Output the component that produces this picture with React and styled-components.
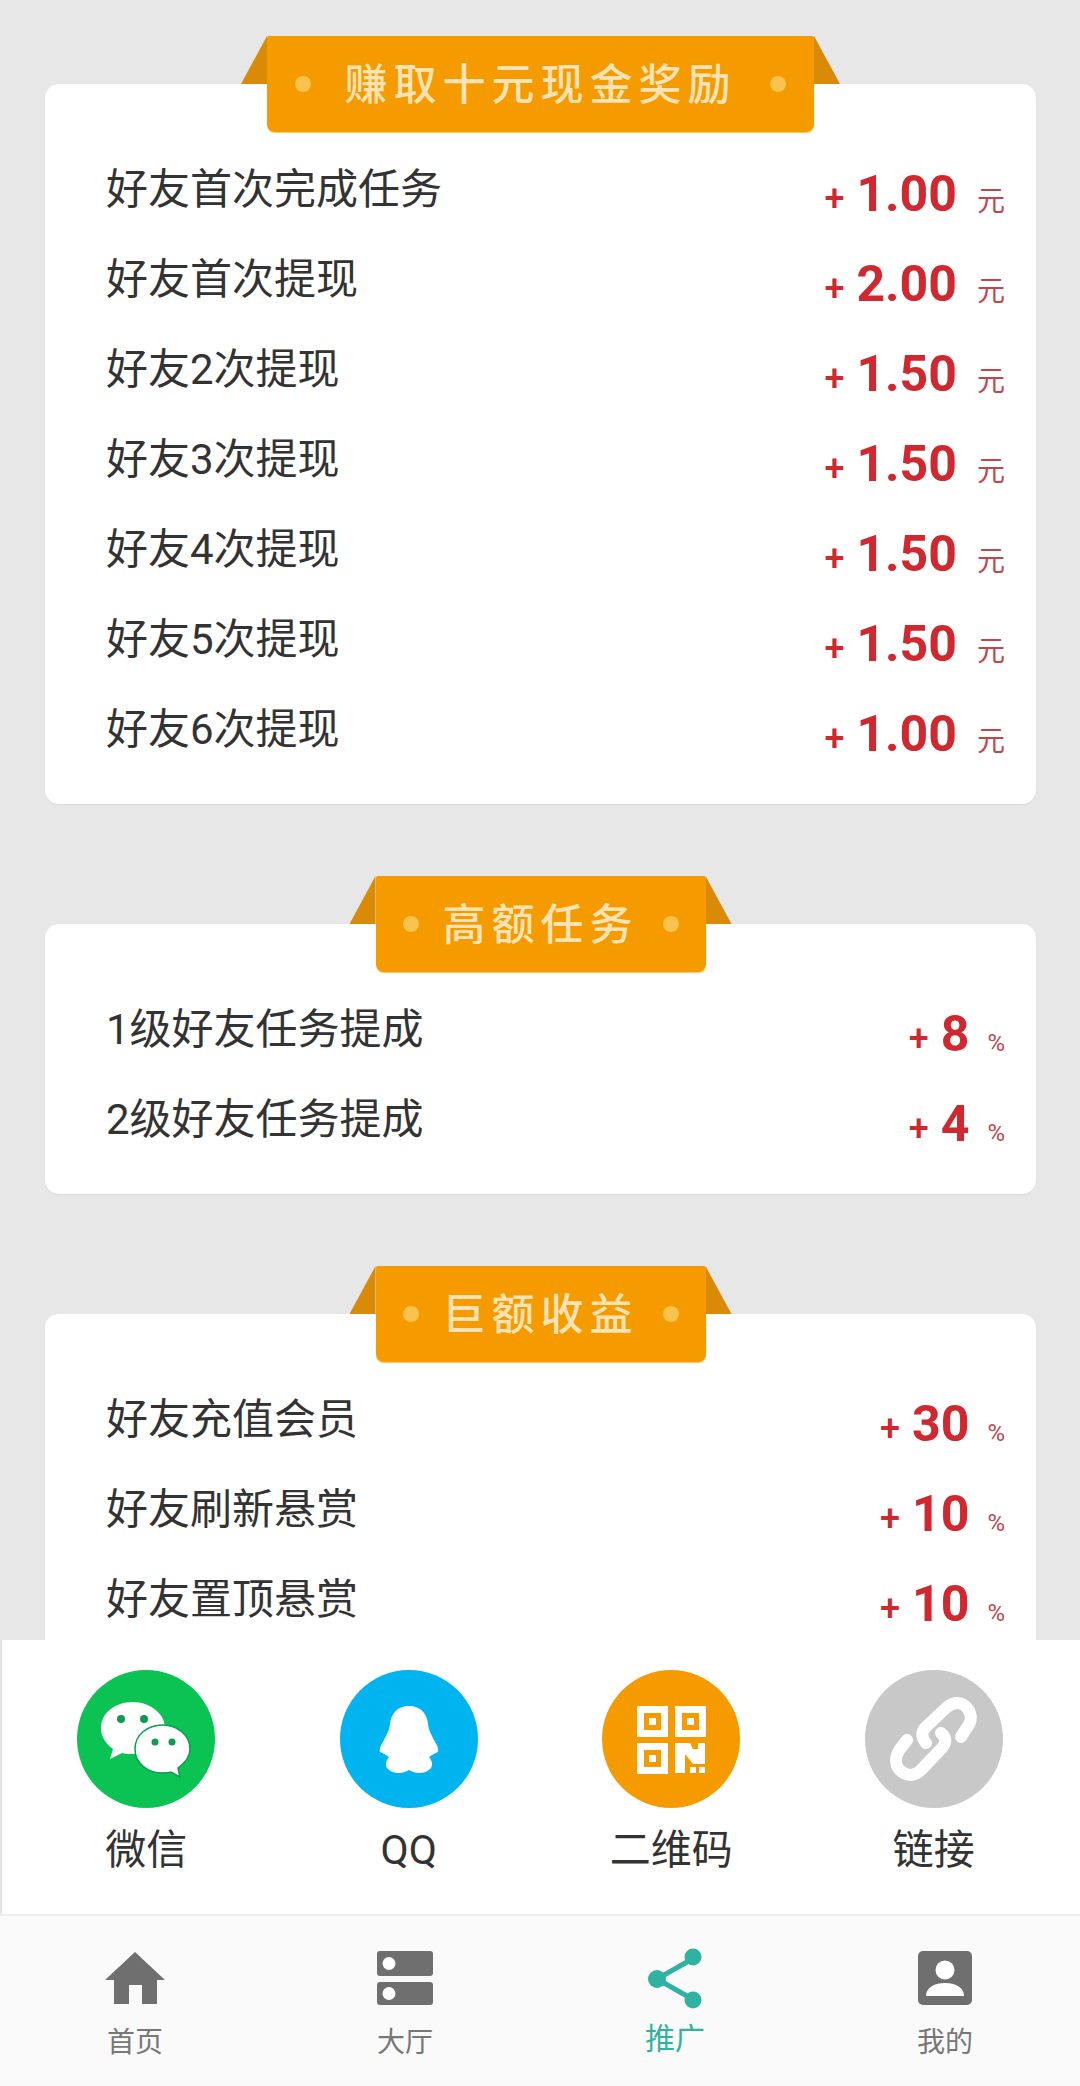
import React from 'react'
import styled, { createGlobalStyle } from 'styled-components'

const GlobalStyle = createGlobalStyle`
  html, body { margin:0; padding:0; background:#e7e7e7; }
  body { font-family:"Roboto","Noto Sans CJK SC",sans-serif; }
`

const sections = [
  {
    title: '赚取十元现金奖励', wide: true, unit: '元',
    rows: [
      ['好友首次完成任务', '1.00'], ['好友首次提现', '2.00'], ['好友2次提现', '1.50'], ['好友3次提现', '1.50'],
      ['好友4次提现', '1.50'], ['好友5次提现', '1.50'], ['好友6次提现', '1.00'],
    ],
  },
  { title: '高额任务', unit: '%', rows: [['1级好友任务提成', '8'], ['2级好友任务提成', '4']] },
  { title: '巨额收益', unit: '%', rows: [['好友充值会员', '30'], ['好友刷新悬赏', '10'], ['好友置顶悬赏', '10']] },
]

function WechatIcon() {
  return (
    <svg width="138" height="138" viewBox="0 0 138 138">
      <circle cx="69" cy="69" r="69" fill="#0ac353" />
      <path d="M56 32c-18 0-32 11-32 26 0 9 5 16 12 21l-3 10 12-6c3 1 6 1 11 1 16 0 32-11 32-26S72 32 56 32z" fill="#fff" />
      <circle cx="44" cy="49" r="4" fill="#0a9d50" />
      <circle cx="67" cy="49" r="4" fill="#0a9d50" />
      <path d="M86 55c-16 0-28 10-28 24s12 24 28 24c3 0 6 0 8-1l9 5-2-9c7-5 12-11 12-19 0-14-13-24-27-24z" fill="#fff" stroke="#0a9d50" strokeWidth="1.5" />
      <circle cx="78" cy="72" r="3.5" fill="#0a9d50" />
      <circle cx="95" cy="72" r="3.5" fill="#0a9d50" />
    </svg>
  )
}

function QQIcon() {
  return (
    <svg width="138" height="138" viewBox="0 0 138 138">
      <circle cx="69" cy="69" r="69" fill="#00b4f0" />
      <path d="M69 36C57 36 51 44 50 54C49.500 60 47 64 44 70C41 75 39 79 40 82C43 83 46 85 49 87C45 92 45 97 49 100C54 104 63 104 69 100C75 104 84 104 89 100C93 97 93 92 89 87C92 85 95 83 98 82C99 79 97 75 94 70C91 64 88.500 60 88 54C87 44 81 36 69 36z" fill="#fff" />
    </svg>
  )
}

function QrIcon() {
  return (
    <svg width="138" height="138" viewBox="0 0 138 138">
      <circle cx="69" cy="69" r="69" fill="#f59b00" />
      <g fill="none" stroke="#fff" strokeWidth="7">
        <rect x="38.500" y="39.500" width="24" height="24" />
        <rect x="76.500" y="39.500" width="24" height="24" />
        <rect x="38.500" y="76.500" width="24" height="24" />
      </g>
      <g fill="#fff">
        <rect x="47" y="48" width="7" height="7" />
        <rect x="85" y="48" width="7" height="7" />
        <rect x="47" y="85" width="7" height="7" />
        <path d="M73 73H88L91 79H96V73H103V94H91L83 84V103H73z" />
        <rect x="88" y="97" width="6" height="6" />
        <rect x="97" y="97" width="6" height="6" />
      </g>
    </svg>
  )
}

function LinkIcon() {
  return (
    <svg width="138" height="138" viewBox="0 0 138 138">
      <circle cx="69" cy="69" r="69" fill="#c8c8c8" />
      <g fill="none" stroke="#fff" strokeWidth="12" strokeLinecap="round">
        <path d="M61 73C55 66 57 60 62 56L82 37C90 31 98 32 103 39C108 47 106 53 101 59L96 67" />
        <path d="M42 70L35 79C29 88 30 97 37 102C44 107 51 105 56 100L77 78C82 72 81 67 76 63" />
      </g>
    </svg>
  )
}

function HomeTabIcon() {
  return (
    <svg width="60" height="52" viewBox="0 0 60 52">
      <path d="M30 0L60 28H52V52H37V33H24V52H9V28H0z" fill="#6f6f6f" />
    </svg>
  )
}

function HallTabIcon() {
  return (
    <svg width="56" height="54" viewBox="0 0 56 54">
      <rect x="0" y="0" width="56" height="25" rx="3" fill="#6f6f6f" />
      <rect x="0" y="31" width="56" height="23" rx="3" fill="#6f6f6f" />
      <circle cx="12" cy="12.500" r="6.500" fill="#fff" />
      <circle cx="12" cy="42.500" r="6.500" fill="#fff" />
    </svg>
  )
}

function ShareTabIcon() {
  return (
    <svg width="54" height="62" viewBox="0 0 54 62">
      <path d="M46 10L9 31l37 21" fill="none" stroke="#2fb3a0" strokeWidth="5" />
      <circle cx="45" cy="9" r="8.500" fill="#2fb3a0" />
      <circle cx="9" cy="31" r="9" fill="#2fb3a0" />
      <circle cx="45" cy="52" r="8.500" fill="#2fb3a0" />
    </svg>
  )
}

function MineTabIcon() {
  return (
    <svg width="54" height="54" viewBox="0 0 54 54">
      <rect width="54" height="54" rx="5" fill="#6f6f6f" />
      <circle cx="27" cy="19" r="9.500" fill="#fff" />
      <path d="M8 45c0-9 9-13 19-13s19 4 19 13z" fill="#fff" />
    </svg>
  )
}

const shares = [
  { label: '微信', icon: <WechatIcon /> },
  { label: 'QQ', icon: <QQIcon /> },
  { label: '二维码', icon: <QrIcon /> },
  { label: '链接', icon: <LinkIcon /> },
]

const tabs = [
  { label: '首页', icon: <HomeTabIcon /> },
  { label: '大厅', icon: <HallTabIcon /> },
  { label: '推广', icon: <ShareTabIcon />, active: true },
  { label: '我的', icon: <MineTabIcon /> },
]

export default function App() {
  return (
    <Page>
      <GlobalStyle />
      <Scroller>
        {sections.map((section) => (
          <Section key={section.title}>
            <Banner $wide={section.wide}>
              <Dot />
              <BannerText>{section.title}</BannerText>
              <Dot />
            </Banner>
            <Card>
              {section.rows.map(([name, value]) => (
                <Row key={name}>
                  <RowName>{name}</RowName>
                  <Reward>
                    <Plus>+</Plus>
                    <Amount>{value}</Amount>
                    <Unit $percent={section.unit === '%'}>{section.unit}</Unit>
                  </Reward>
                </Row>
              ))}
            </Card>
          </Section>
        ))}
      </Scroller>
      <SharePanel>
        {shares.map((item) => (
          <ShareItem key={item.label}>
            {item.icon}
            <ShareLabel>{item.label}</ShareLabel>
          </ShareItem>
        ))}
      </SharePanel>
      <TabBar>
        {tabs.map((tab) => (
          <Tab key={tab.label} $active={tab.active}>
            <TabIcon $active={tab.active}>{tab.icon}</TabIcon>
            <TabLabel $active={tab.active}>{tab.label}</TabLabel>
          </Tab>
        ))}
      </TabBar>
    </Page>
  )
}

const Page = styled.div`
  width:1080px;
  height:2086px;
  display:flex;
  flex-direction:column;
  overflow:hidden;
`
const Scroller = styled.div`
  height:1640px;
  flex:none;
  overflow:hidden;
  padding:36px 44px 0 45px;
  box-sizing:border-box;
  display:flex;
  flex-direction:column;
  gap:72px;
`
const Section = styled.section`
  display:flex;
  flex-direction:column;
  align-items:center;
  flex:none;
`
const Banner = styled.div`
  position:relative;
  z-index:1;
  width:${(p) => (p.$wide ? '547px' : '330px')};
  height:96px;
  margin-bottom:-48px;
  box-sizing:border-box;
  background:#f59b00;
  border-radius:2px 2px 8px 8px;
  box-shadow:0 1px 1px #fbc45c;
  display:flex;
  align-items:center;
  justify-content:space-between;
  padding:0 ${(p) => (p.$wide ? '28px' : '27px')};

  &::before, &::after {
    content:'';
    position:absolute;
    top:0;
    width:26px;
    height:48px;
    background:#d98a06;
  }
  &::before { left:-26px; clip-path:polygon(100% 0, 100% 100%, 0 100%); }
  &::after { right:-26px; clip-path:polygon(0 0, 100% 100%, 0 100%); }
`
const Dot = styled.span`
  width:16px;
  height:16px;
  border-radius:50%;
  background:#fbc24d;
`
const BannerText = styled.span`
  font-size:43px;
  font-weight:500;
  line-height:96px;
  letter-spacing:6px;
  margin-right:-6px;
  position:relative;
  top:1px;
  left:-3px;
  color:#fde3b4;
`
const Card = styled.div`
  width:100%;
  box-sizing:border-box;
  background:#fff;
  border-radius:14px;
  padding:65px 31px 25px 61px;
  display:flex;
  flex-direction:column;
  box-shadow:0 1px 2px rgba(0,0,0,0.06);
`
const Row = styled.div`
  height:90px;
  display:flex;
  align-items:center;
  justify-content:space-between;
`
const RowName = styled.span`
  font-size:42px;
  color:#333;
  position:relative;
  top:-9px;
`
const Reward = styled.span`
  display:flex;
  align-items:baseline;
  color:#d0282e;
`
const Plus = styled.span`
  font-size:36px;
  font-weight:500;
  margin-right:12px;
`
const Amount = styled.span`
  font-size:50px;
  font-weight:700;
`
const Unit = styled.span`
  font-size:${(p) => (p.$percent ? '24px' : '28px')};
  margin-left:${(p) => (p.$percent ? '18px' : '20px')};
  color:#c0474c;
`
const SharePanel = styled.div`
  height:274px;
  flex:none;
  background:#fff;
  border-left:2px solid #e4e4e4;
  box-sizing:border-box;
  padding:30px 15px 0 13px;
  display:grid;
  grid-template-columns:repeat(4, 1fr);
`
const ShareItem = styled.div`
  display:flex;
  flex-direction:column;
  align-items:center;
`
const ShareLabel = styled.span`
  font-size:41px;
  line-height:50px;
  margin-top:17px;
  color:#333;
`
const TabBar = styled.nav`
  flex:1;
  background:#fafafa;
  border-top:2px solid #eee;
  display:grid;
  grid-template-columns:repeat(4, 1fr);
`
const Tab = styled.div`
  display:flex;
  flex-direction:column;
  align-items:center;
  padding-top:${(p) => (p.$active ? '32px' : '35px')};
`
const TabIcon = styled.div`
  height:${(p) => (p.$active ? '62px' : '54px')};
  display:flex;
  align-items:center;
  justify-content:center;
`
const TabLabel = styled.span`
  font-size:${(p) => (p.$active ? '30px' : '28px')};
  line-height:36px;
  margin-top:${(p) => (p.$active ? '11px' : '20px')};
  color:${(p) => (p.$active ? '#2fb3a0' : '#777')};
`
